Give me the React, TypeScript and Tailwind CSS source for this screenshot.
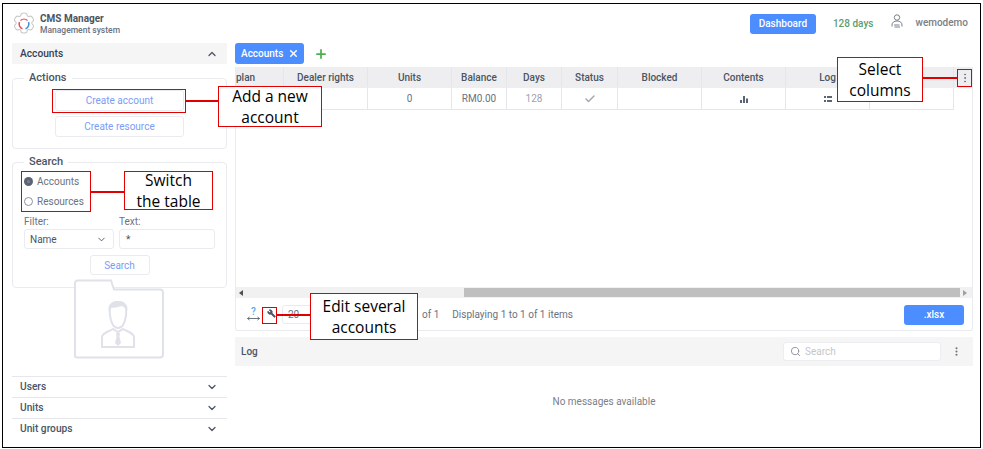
import { ChevronDown, ChevronUp, Plus, X, Check, Search, EllipsisVertical, Wrench } from "lucide-react";

const font = { fontFamily: "Roboto, 'Liberation Sans', sans-serif" };

function Fieldset({ title, className, children }: { title: string; className: string; children: React.ReactNode }) {
  return (
    <div className={`relative rounded border border-[#e9ebee] ${className}`}>
      <span className="absolute left-[11px] top-[-9px] bg-white px-[5px] text-[11px] leading-[16px] font-medium text-[#4b5563]">{title}</span>
      {children}
    </div>
  );
}

function Note({ className, children }: { className: string; children: React.ReactNode }) {
  return (
    <div
      className={`absolute z-20 flex flex-col items-center justify-center border border-[#e00000] bg-white text-center text-[15.5px] leading-[20.500px] text-black ${className}`}
      style={{ fontFamily: "'Open Sans', 'Noto Sans', sans-serif" }}
    >
      {children}
    </div>
  );
}

const cols: [string, string][] = [
  ["plan", "w-[48px] justify-start"],
  ["Dealer rights", "w-[84px]"],
  ["Units", "w-[84px]"],
  ["Balance", "w-[55px]"],
  ["Days", "w-[55px]"],
  ["Status", "w-[56px]"],
  ["Blocked", "w-[84px]"],
  ["Contents", "w-[84px]"],
  ["Log", "w-[84px]"],
  ["", "w-[84px]"],
];

function Cell({ w, children }: { w: string; children?: React.ReactNode }) {
  return <div className={`flex h-full shrink-0 items-center justify-center border-r border-[#e5e6e9] ${w}`}>{children}</div>;
}

function SideRow({ label }: { label: string }) {
  return (
    <div className="flex h-[21px] items-center justify-between border-t border-[#e5e7eb] pl-[8px] pr-[9px] text-[10.2px] font-medium text-[#4b5563]">
      <span>{label}</span>
      <ChevronDown size={12} strokeWidth={2.5} className="text-[#4b5563]" />
    </div>
  );
}

export default function App() {
  return (
    <div className="relative h-[449px] w-[983px] overflow-hidden bg-white pl-[2px] pt-[3px]" style={font}>
      <div className="relative flex h-[445px] w-[979px] flex-col border border-black">
        {/* header */}
        <header className="flex h-[39px] shrink-0 items-center pl-[9px] pr-[12px]">
          <svg width="24" height="24" viewBox="0 0 24 24" fill="none" className="shrink-0">
            <path d="M9 2.500c0-1 1-1.500 3-1.500s3 .5 3 1.500c0 1.500 1.500 2.500 2.800 1.800 1-.5 2 0 3 1.700s1 2.800 0 3.300c-1.300.7-1.300 2.700 0 3.400 1 .5 1 1.600 0 3.300s-2 2.200-3 1.700c-1.300-.7-2.800.3-2.800 1.800 0 1-1 1.500-3 1.500s-3-.5-3-1.500c0-1.500-1.500-2.500-2.800-1.800-1 .5-2 0-3-1.700s-1-2.800 0-3.300c1.300-.7 1.300-2.700 0-3.400-1-.5-1-1.600 0-3.300s2-2.200 3-1.700C7.500 5 9 4 9 2.500z" stroke="#c9c9c9" strokeWidth="1.100" />
            <path d="M7.500 10a5 5 0 0 0 3 6.700" stroke="#e0505a" strokeWidth="1.500" />
            <path d="M13.500 16.700a5 5 0 0 0 3-6.700" stroke="#3f8fd0" strokeWidth="1.500" />
            <path d="M8.500 8.500a5 5 0 0 1 7 0" stroke="#e0505a" strokeWidth="1.300" />
          </svg>
          <div className="ml-[4px] flex flex-col">
            <span className="text-[10px] leading-[13px] font-bold text-[#4b5563]">CMS Manager</span>
            <span className="text-[8.500px] leading-[11px] font-medium text-[#6b7280]">Management system</span>
          </div>
          <div className="ml-auto flex items-center">
            <div className="flex h-[20px] w-[66px] items-center justify-center rounded-[3px] bg-[#4c8dff] text-[10px] font-medium text-white">Dashboard</div>
            <span className="ml-[17px] text-[10px] font-medium text-[#5c9e6e]">128 days</span>
            <svg width="12" height="14" viewBox="0 0 12 14" fill="none" stroke="#6b7280" strokeWidth="0.900" className="ml-[18px] mb-[5px]">
              <circle cx="6" cy="3.500" r="2.700" />
              <path d="M1 12.500v-1.500c0-2.500 2-4 5-4s5 1.500 5 4v1.500M3 11h5.500M3.500 13h5.500" />
            </svg>
            <span className="ml-[12px] mb-[3px] text-[10px] font-medium text-[#7b8087]">wemodemo</span>
          </div>
        </header>

        <div className="flex min-h-0 flex-1 pl-[9px]">
          {/* sidebar */}
          <aside className="flex w-[215px] shrink-0 flex-col">
            <div className="flex h-[21px] shrink-0 items-center justify-between bg-[#f5f5f5] pl-[8px] pr-[9px] text-[10.200px] font-medium text-[#374151]">
              <span>Accounts</span>
              <ChevronUp size={12} strokeWidth={2.5} className="text-[#4b5563]" />
            </div>
            <Fieldset title="Actions" className="mt-[14px] flex h-[71px] shrink-0 flex-col items-center pt-[11px]">
              <button className="flex h-[21px] w-[129px] items-center justify-center rounded-[3px] border border-[#e9ebee] text-[10px] text-[#7c9cf5]">Create account</button>
              <button className="mt-[5px] flex h-[21px] w-[129px] items-center justify-center rounded-[3px] border border-[#e9ebee] text-[10px] text-[#7c9cf5]">Create resource</button>
            </Fieldset>
            <Fieldset title="Search" className="mt-[13px] h-[126px] shrink-0 px-[11px] pt-[8px]">
              <div className="flex h-[20px] items-center text-[10px] text-[#6b7280]">
                <span className="mr-[4px] flex h-[9px] w-[9px] items-center justify-center rounded-full bg-[#5b6472]">
                  <span className="h-[3px] w-[3px] rounded-full bg-[#7b828e]" />
                </span>
                Accounts
              </div>
              <div className="flex h-[20px] items-center text-[10px] text-[#6b7280]">
                <span className="mr-[4px] h-[9px] w-[9px] rounded-full border border-[#8b919b] bg-white" />
                Resources
              </div>
              <div className="mt-[3px] flex gap-[5px]">
                <div className="w-[90px]">
                  <div className="text-[10px] leading-[15px] text-[#6b7280]">Filter:</div>
                  <div className="flex h-[20px] items-center justify-between rounded-[3px] border border-[#e9ebee] pl-[5px] pr-[6px] text-[10px] text-[#4b5563]">
                    Name
                    <ChevronDown size={11} strokeWidth={2} className="text-[#4b5563]" />
                  </div>
                </div>
                <div className="w-[96px]">
                  <div className="text-[10px] leading-[15px] text-[#6b7280]">Text:</div>
                  <div className="flex h-[20px] items-center rounded-[3px] border border-[#e9ebee] pl-[6px] text-[10px] text-[#4b5563]">*</div>
                </div>
              </div>
              <div className="mt-[6px] flex justify-center">
                <button className="flex h-[20px] w-[60px] items-center justify-center rounded-[3px] border border-[#e9ebee] text-[10px] text-[#7c9cf5]">Search</button>
              </div>
            </Fieldset>
            {/* folder drawing overlaps the fieldset border */}
            <div className="relative z-10 -mt-[9px] ml-[61px] h-[81px] w-[92px] shrink-0">
              <svg width="92" height="81" viewBox="0 0 92 81" fill="none" stroke="#dfe2e8">
                <path d="M2 78.500V4a2.500 2.500 0 0 1 2.500-2.500H38l3 9h46a3 3 0 0 1 3 3v62a3 3 0 0 1-3 3H4.500A2.500 2.500 0 0 1 2 76z" fill="white" strokeWidth="2" />
                <path d="M37 36c-1-8 1-13 8-13s9 5 8 13c-1 8-4 13-8 13s-7-5-8-13z" strokeWidth="2" />
                <path d="M36 33c-2-7 2-11 9-11s11 4 9 11c-1-3-3-5-5-6-4 1-8 2-11 2z" fill="#dfe2e8" stroke="none" />
                <path d="M29 68v-10c0-4 8-6 11-8l5 3 5-3c3 2 11 4 11 8v10z" strokeWidth="2" />
                <path d="M43 54h4l-.5 4 1.500 6-3 3-3-3 1.500-6z" fill="#dfe2e8" stroke="none" />
              </svg>
            </div>
            <div className="mt-[16px]">
              <SideRow label="Users" />
              <SideRow label="Units" />
              <SideRow label="Unit groups" />
            </div>
          </aside>

          {/* main */}
          <main className="ml-[8px] flex min-w-0 flex-1 flex-col pr-[7px]">
            <div className="flex h-[21px] shrink-0 items-center">
              <div className="flex h-[21px] w-[69px] items-center rounded-[3px] bg-[#4c8dff] pl-[6px] text-[10px] font-medium text-white">
                Accounts
                <X size={11} strokeWidth={3} className="ml-[5px]" />
              </div>
              <Plus size={14} strokeWidth={3} className="ml-[10px] text-[#4caf50]" />
            </div>
            <div className="mt-[3px] flex h-[264px] shrink-0 flex-col rounded-b-[3px] border-x border-b border-[#e9ebee]">
              <div className="relative min-h-0 flex-1">
                <div className="flex h-[21px] items-center bg-[#eeeef0] pb-[1px] text-[10px] font-medium text-[#4b5563]">
                  {cols.map(([c, w]) => (
                    <Cell key={c + w} w={w}>{c}</Cell>
                  ))}
                </div>
                <div className="flex h-[22px] w-[718px] items-center border-b border-[#e5e6e9] text-[10px] text-[#6b7280]">
                  <Cell w="w-[48px]" />
                  <Cell w="w-[84px]" />
                  <Cell w="w-[84px]">0</Cell>
                  <Cell w="w-[55px]">RM0.00</Cell>
                  <Cell w="w-[55px]"><span className="text-[#9ca3af]">128</span></Cell>
                  <Cell w="w-[56px]"><Check size={12} strokeWidth={3} className="text-[#a3a8b0]" /></Cell>
                  <Cell w="w-[84px]" />
                  <Cell w="w-[84px]">
                    <svg width="8" height="7" viewBox="0 0 8 7" fill="#5b6472" className="mt-[1px]"><rect x="0" y="4" width="2" height="3" /><rect x="3" y="0" width="2" height="7" /><rect x="6" y="2.500" width="2" height="4.500" /></svg>
                  </Cell>
                  <Cell w="w-[84px]">
                    <svg width="8" height="6" viewBox="0 0 8 6" fill="#5b6472" className="mt-[1px]"><rect x="0" y="0" width="2" height="2" /><rect x="3" y="0" width="5" height="2" /><rect x="0" y="4" width="2" height="2" /><rect x="3" y="4" width="5" height="2" /></svg>
                  </Cell>
                  <Cell w="w-[84px]" />
                </div>
                <EllipsisVertical size={12} strokeWidth={2} className="absolute right-[1px] top-[5px] text-[#6b7280]" />
              </div>
              <div className="flex h-[11px] shrink-0 items-center bg-[#f1f1f1]">
                <span className="ml-[3px] h-0 w-0 border-y-[3px] border-r-[4px] border-y-transparent border-r-[#505050]" />
                <div className="ml-[221px] h-[9px] w-[496px] bg-[#bfbfbf]" />
                <span className="ml-[3px] h-0 w-0 border-y-[3px] border-l-[4px] border-y-transparent border-l-[#a0a0a0]" />
              </div>
              <div className="flex h-[32px] shrink-0 items-center pl-[11px] pr-[8px] pt-[1px] text-[10px] text-[#6b7280]">
                <div className="mb-[2px] flex w-[13px] shrink-0 flex-col items-center">
                  <span className="text-[10px] leading-[9px] font-medium text-[#5aa5ea]">?</span>
                  <svg width="13" height="5" viewBox="0 0 13 5" fill="none">
                    <path d="M0.500 2.500h12M0.500 2.500l2-1.500M0.500 2.500l2 1.500M12.500 2.500l-2-1.500M12.500 2.500l-2 1.500" stroke="#5b6472" strokeWidth="0.900" />
                  </svg>
                </div>
                <Wrench size={9} fill="#4b5563" className="ml-[7px] mb-[2px] -scale-x-100 text-[#4b5563]" />
                <div className="ml-[6px] flex h-[19px] w-[40px] items-center rounded-[3px] border border-[#e9ebee] pl-[5px]">20</div>
                <span className="ml-[100px]">of 1</span>
                <span className="ml-[13px]">Displaying 1 to 1 of 1 items</span>
                <div className="ml-auto flex h-[20px] w-[60px] items-center justify-center rounded-[3px] bg-[#4c8dff] font-medium text-white">.xlsx</div>
              </div>
            </div>
            <div className="mt-[6px] flex h-[29px] shrink-0 items-center bg-[#f5f5f5] pl-[6px] pr-[11px]">
              <span className="text-[10px] font-medium text-[#4b5563]">Log</span>
              <div className="ml-auto flex h-[19px] w-[158px] items-center rounded-[3px] border border-[#ebedf0] bg-white pl-[6px] text-[10px] text-[#c4c7cc]">
                <Search size={11} strokeWidth={2} className="mr-[4px] text-[#8b919b]" />
                Search
              </div>
              <EllipsisVertical size={11} strokeWidth={2.5} className="ml-[10px] text-[#6b7280]" />
            </div>
            <div className="flex flex-1 items-start justify-center pt-[28px] text-[10px] text-[#7b8087]">No messages available</div>
          </main>
        </div>

        {/* annotations: coordinates relative to the black frame */}
        <div className="absolute left-[49px] top-[85px] z-10 h-[24px] w-[134px] border border-[#e00000]" />
        <div className="absolute left-[183px] top-[96px] z-10 h-[2px] w-[34px] bg-[#e00000]" />
        <Note className="left-[215px] top-[82px] h-[41px] w-[104px]"><span>Add a new</span><span>account</span></Note>

        <div className="absolute left-[18px] top-[167px] z-10 h-[41px] w-[70px] border border-[#e00000]" />
        <div className="absolute left-[88px] top-[187px] z-10 h-[2px] w-[34px] bg-[#e00000]" />
        <Note className="left-[121px] top-[167px] h-[39px] w-[89px]"><span>Switch</span><span>the table</span></Note>

        <div className="absolute left-[259px] top-[303px] z-10 h-[17px] w-[15px] border border-[#e00000]" />
        <div className="absolute left-[274px] top-[310px] z-10 h-[2px] w-[34px] bg-[#e00000]" />
        <Note className="left-[307px] top-[289px] h-[47px] w-[108px]"><span>Edit several</span><span>accounts</span></Note>

        <Note className="left-[834px] top-[53px] h-[45px] w-[86px]"><span>Select</span><span>columns</span></Note>
        <div className="absolute left-[920px] top-[73px] z-10 h-[2px] w-[35px] bg-[#e00000]" />
        <div className="absolute left-[954px] top-[65px] z-10 h-[18px] w-[15px] border border-[#e00000]" />
      </div>
    </div>
  );
}
